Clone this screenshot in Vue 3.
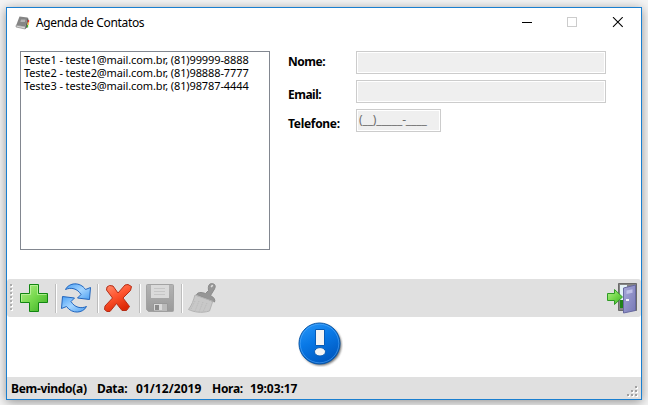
<script setup>
const contacts = [
  'Teste1 - teste1@mail.com.br, (81)99999-8888',
  'Teste2 - teste2@mail.com.br, (81)98888-7777',
  'Teste3 - teste3@mail.com.br, (81)98787-4444',
]
</script>

<template>
  <div class="desktop">
    <div class="window">
      <header class="titlebar">
        <svg class="app-icon" width="16" height="16" viewBox="0 0 16 16">
          <path d="M4.500 1.500 12.500 2.500 10.500 11.500 1.200 10.200Z" fill="#858585" />
          <path d="M6 4.500h4.500l-.6 2.500h-4.500Z" fill="#b4b4b4" />
          <path d="M1.200 10.200 10.500 11.500 10.200 14 1 12Z" fill="#d5d5d5" stroke="#777" stroke-width=".6" />
          <path d="M12.500 2.500 13.500 4 12 12.500 10.200 14 10.500 11.500Z" fill="#5c5c5c" />
          <path d="M13.500 5v2.500" stroke="#e33" stroke-width="1.300" />
          <path d="M13.100 7.500v2.500" stroke="#f5b52a" stroke-width="1.300" />
          <path d="M12.500 10v2.500" stroke="#43ad31" stroke-width="1.300" />
        </svg>
        <h1>Agenda de Contatos</h1>
        <svg class="controls" width="120" height="12" viewBox="0 0 120 12" fill="none">
          <path d="M2 5.500h10" stroke="#000" />
          <rect x="47.500" y=".5" width="9" height="9" stroke="#ccc" />
          <path d="M93 .2l9.700 9.700M102.700 .2l-9.700 9.700" stroke="#000" stroke-width="1.100" />
        </svg>
      </header>

      <main>
        <ul class="contacts">
          <li v-for="c in contacts" :key="c">{{ c }}</li>
        </ul>
        <form class="fields">
          <label class="nome">Nome:</label>
          <div class="input"></div>
          <label class="email">Email:</label>
          <div class="input"></div>
          <label class="fone">Telefone:</label>
          <div class="input short">(__)_____-____</div>
        </form>
      </main>

      <nav class="toolbar">
        <svg class="grip" width="4" height="29" viewBox="0 0 4 29">
          <g v-for="n in 7" :key="n">
            <rect x="1" :y="(n - 1) * 4 + 1" width="2" height="2" fill="#fff" />
            <rect x="0" :y="(n - 1) * 4" width="2" height="2" fill="#adadad" />
          </g>
        </svg>
        <svg class="tool" viewBox="0 0 32 32">
          <defs>
            <linearGradient id="green" x1="0" y1="0" x2="1" y2="1">
              <stop offset="0" stop-color="#b5f08c" />
              <stop offset=".5" stop-color="#75d84c" />
              <stop offset="1" stop-color="#39ad22" />
            </linearGradient>
          </defs>
          <path d="M11.500 2.500h9v9h9v9h-9v9h-9v-9h-9v-9h9Z" fill="url(#green)" stroke="#118611" />
          <path d="M12.500 12.500v-9h7v9h9M3.500 19.500v-7h9" fill="none" stroke="#c4f5a6" opacity=".7" />
        </svg>
        <i class="sep"></i>
        <svg class="tool" viewBox="0 0 32 32">
          <defs>
            <linearGradient id="blue" x1="0" y1="0" x2="1" y2="1">
              <stop offset="0" stop-color="#4aa0f5" />
              <stop offset=".5" stop-color="#a5d5ff" />
              <stop offset="1" stop-color="#4b9ff2" />
            </linearGradient>
          </defs>
          <g fill="url(#blue)" stroke="#2265bd" stroke-linejoin="round">
            <path d="M5.500 7.500C9 .5 20-.5 25.500 7.500L30.500 5.500 29.500 17.500 17.500 16 21 12.500C17.500 6.500 11 5 5.500 7.500Z" />
            <path d="M26.500 24.500C23 31.500 12 32.300 6.500 24.500L1.500 26.500 2.500 14.500 14.500 16 11 19.500C14.500 25.500 21 27 26.500 24.500Z" />
          </g>
        </svg>
        <i class="sep"></i>
        <svg class="tool" viewBox="0 0 32 32">
          <defs>
            <linearGradient id="red" x1="0" y1="0" x2=".5" y2="1">
              <stop offset="0" stop-color="#ff9274" />
              <stop offset=".5" stop-color="#ff5630" />
              <stop offset="1" stop-color="#dc2806" />
            </linearGradient>
          </defs>
          <path d="M5 5 7.500 3.500 11 4 16 11 23 3 26 2.500 29.500 4.500 28.500 8.500 21 16 27.500 24.500 24.500 28.500 20 28.500 14.500 21.500 8 29.500 5 29.500 2.500 27.500 3 24 10.500 16 4.500 8Z" fill="url(#red)" stroke="#b52d16" stroke-linejoin="round" />
        </svg>
        <i class="sep"></i>
        <svg class="tool" viewBox="0 0 32 32">
          <defs>
            <linearGradient id="steel" x1="0" y1="0" x2="0" y2="1">
              <stop offset="0" stop-color="#b3b3b3" />
              <stop offset="1" stop-color="#9a9a9a" />
            </linearGradient>
          </defs>
          <path d="M3.500 2.500h25a1 1 0 0 1 1 1v25a1 1 0 0 1-1 1h-24l-2-2v-24a1 1 0 0 1 1-1Z" fill="url(#steel)" stroke="#a3a3a3" />
          <path d="M7 3h18v13H7Z" fill="#dadada" />
          <path d="M10 6.500h11M10 9.500h11M10 12.500h11" stroke="#c6c6c6" />
          <path d="M9.500 21.500h14V29H9.500Z" fill="#dadada" stroke="#999" />
          <path d="M11 23h4v5h-4Z" fill="#8b8b8b" />
          <path d="M18 22h5v7h-5Z" fill="#bbb" />
        </svg>
        <i class="sep"></i>
        <svg class="tool" viewBox="0 0 32 32">
          <path d="M9 13 27 18.500 23.500 29C15 31.500 8 30 2.500 27.500 6 23 7.500 18 9 13Z" fill="#c8c8c8" stroke="#b3b3b3" />
          <path d="m9 19-4 8m8-8-4 10m8-9-4 10m8-9-4 9" stroke="#b8b8b8" stroke-dasharray="1 1" />
          <path d="M10.500 12.500Q12.500 9 19.500 11.500L22.500 8.500Q21.500 2 25.500 1.500 31 2 28.500 7L24.500 13.500Q30 16.500 28.500 20Z" fill="#969696" stroke="#8b8b8b" />
          <path d="m25.500 4.500.8-.8" stroke="#ddd" stroke-width="1.700" stroke-linecap="round" />
          <path d="m10.500 13.500 17 6" stroke="#b6b6b6" />
        </svg>
        <svg class="tool exit" viewBox="0 0 32 32">
          <defs>
            <linearGradient id="door" x1="0" y1="0" x2="1" y2="1">
              <stop offset="0" stop-color="#a7a8da" />
              <stop offset="1" stop-color="#7779b5" />
            </linearGradient>
          </defs>
          <path d="M12.500 1.500h18v27h-18Z" fill="#858585" stroke="#6b6b6b" />
          <path d="M14 3h7v15h-7Z" fill="#e3f2f7" />
          <path d="M14 18h6v8h-6Z" fill="#21831b" />
          <path d="M17.500 6 29.500 3v25.500L17.500 31Z" fill="url(#door)" stroke="#6769a0" />
          <path d="m20.500 8.500 6-1.200v3.500l-6 1.200Z" fill="#bfc0e8" />
          <path d="M20 18h3" stroke="#f3f3fb" stroke-width="2" />
          <path d="M1.500 11.500h7V7.500L16.500 15l-8 7.500V18.500h-7Z" fill="url(#green)" stroke="#2f9b26" />
        </svg>
      </nav>

      <section class="notice">
        <svg width="46" height="46" viewBox="0 0 46 46">
          <defs>
            <linearGradient id="info" x1="0" y1="0" x2=".5" y2="1">
              <stop offset="0" stop-color="#2a9afa" />
              <stop offset=".5" stop-color="#0878e6" />
              <stop offset="1" stop-color="#005ac2" />
            </linearGradient>
            <filter id="soft"><feGaussianBlur stdDeviation=".8" /></filter>
          </defs>
          <circle cx="23.800" cy="24" r="20.600" fill="#444" opacity=".75" filter="url(#soft)" />
          <circle cx="22.500" cy="22.500" r="20.500" fill="url(#info)" stroke="#0756a8" />
          <circle cx="22.500" cy="22.500" r="19.300" fill="none" stroke="#65b6ff" stroke-width=".8" opacity=".6" />
          <path d="M18.500 8.500h9v16h-9Z" fill="#f4f4f4" stroke="#075bb6" />
          <ellipse cx="23" cy="30.800" rx="5.500" ry="4.200" fill="#f4f4f4" stroke="#075bb6" />
        </svg>
      </section>

      <footer class="status">
        <span class="welcome">Bem-vindo(a)</span>
        <span class="date-label">Data:</span>
        <span class="date">01/12/2019</span>
        <span class="time-label">Hora:</span>
        <span class="time">19:03:17</span>
        <svg class="resize" width="12" height="12" viewBox="0 0 12 12">
          <path d="M9 1h2v2H9zM5 5h2v2H5zM9 5h2v2H9zM1 9h2v2H1zM5 9h2v2H5zM9 9h2v2H9z" fill="#fff" />
          <path d="M8 0h2v2H8zM4 4h2v2H4zM8 4h2v2H8zM0 8h2v2H0zM4 8h2v2H4zM8 8h2v2H8z" fill="#a0a0a0" />
        </svg>
      </footer>
    </div>
  </div>
</template>

<style>
body { overflow: hidden; }
</style>

<style scoped>
* { box-sizing: border-box; margin: 0; padding: 0; }
.desktop {
  width: 648px;
  height: 405px;
  padding: 7px 6px 5px;
  overflow: hidden;
  background: #f4f4f4;
  font-family: "Noto Sans", "Open Sans", sans-serif;
  color: #000;
}
.window {
  display: flex;
  flex-direction: column;
  width: 636px;
  height: 393px;
  border: 1px solid #1a7fd0;
  background: #fff;
  box-shadow: 0 2px 10px rgba(0, 0, 0, .4);
}
.titlebar {
  display: flex;
  align-items: center;
  height: 29px;
  padding-left: 8px;
}
h1 {
  margin-left: 5px;
  font-size: 12px;
  line-height: 16px;
  font-weight: 400;
  letter-spacing: -.34px;
  white-space: nowrap;
}
.controls { margin: 0 1px 0 auto; }
main { display: flex; height: 242px; padding: 14px 13px 0; }
.contacts {
  width: 250px;
  height: 199px;
  padding: 1px 3px;
  border: 1px solid #828790;
  list-style: none;
  font-size: 11px;
  line-height: 13px;
  letter-spacing: -.11px;
  white-space: nowrap;
}
.fields {
  display: grid;
  grid-template-columns: 68px 250px;
  grid-auto-rows: 23px;
  row-gap: 6px;
  margin-left: 18px;
}
label {
  font-size: 12px;
  line-height: 16px;
  font-weight: 700;
  letter-spacing: -.3px;
}
.nome { padding-top: 3px; letter-spacing: -.45px; }
.email { padding-top: 7px; letter-spacing: -.5px; }
.fone { padding-top: 7px; }
.input {
  height: 23px;
  border: 1px solid #ccc;
  background: #efefef;
  box-shadow: inset 0 0 0 1px #fff;
}
.short {
  width: 85px;
  padding: 2px;
  font-size: 12px;
  line-height: 16px;
  letter-spacing: -.15px;
  color: #6d6d6d;
  white-space: nowrap;
}
.toolbar {
  display: flex;
  align-items: center;
  height: 38px;
  padding: 0 3px;
  border-radius: 3px;
  background: #e0e0e0;
}
.grip { margin-right: 4px; }
.tool { flex: none; width: 32px; height: 32px; }
.sep {
  width: 2px;
  height: 29px;
  margin: 1px 3px 0 5px;
  border-left: 1px solid #bdbdbd;
  border-right: 1px solid #fff;
}
.exit { margin-left: auto; }
.notice {
  display: flex;
  justify-content: center;
  height: 60px;
  padding: 4px 8px 0 0;
}
.status {
  display: flex;
  height: 22px;
  padding: 4px 2px 0 4px;
  background: #e0e0e0;
  font-size: 12px;
  line-height: 16px;
  font-weight: 700;
  letter-spacing: -.3px;
  white-space: nowrap;
}
.welcome { width: 86px; }
.date-label { width: 39px; }
.date { width: 76px; letter-spacing: .05px; }
.time-label { width: 38px; }
.time { letter-spacing: -.08px; }
.resize { margin: 5px 0 0 auto; }
</style>
